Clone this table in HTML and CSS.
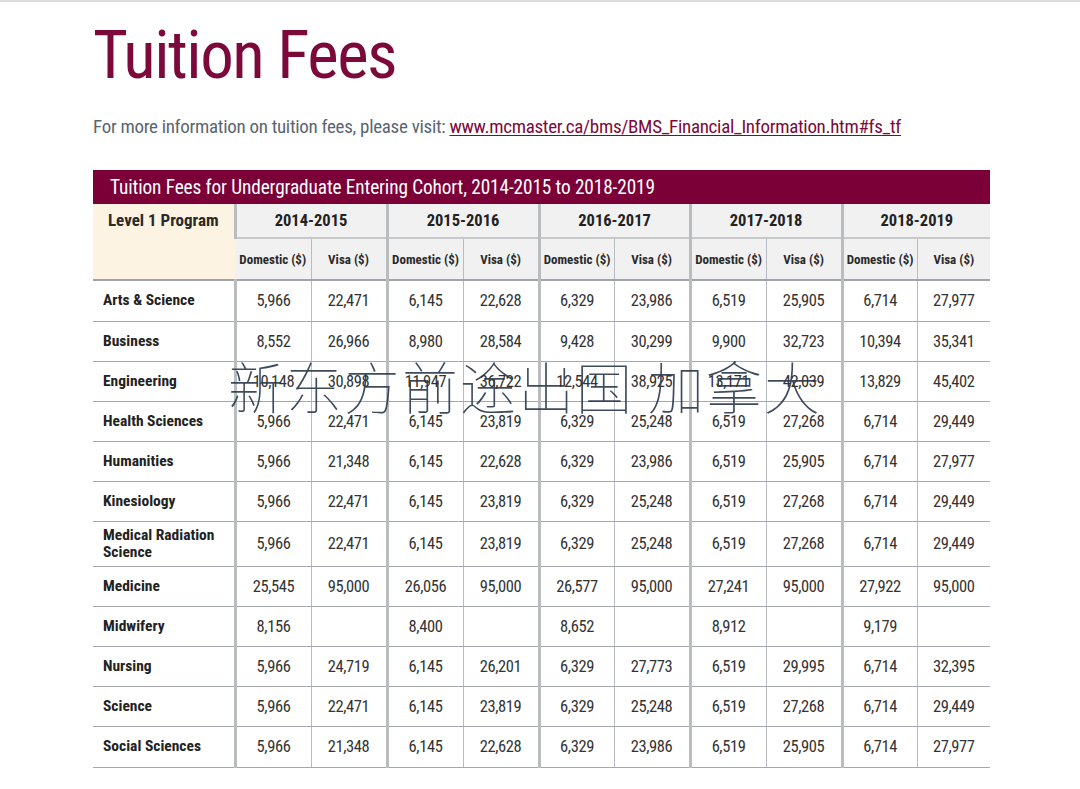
FILE: index.html
```html
<!DOCTYPE html>
<html>
<head>
<meta charset="utf-8">
<link rel="stylesheet" href="styles.css">
</head>
<body>
<div class="topline"></div>
<main class="page">
  <h1 class="title">Tuition Fees</h1>
  <p class="intro">For more information on tuition fees, please visit: <a class="link" href="#">www.mcmaster.ca/bms/BMS_Financial_Information.htm#fs_tf</a></p>
  <section class="tablewrap">
    <div class="banner">Tuition Fees for Undergraduate Entering Cohort, 2014-2015 to 2018-2019</div>
    <table class="fees">
      <colgroup>
        <col class="c-prog">
        <col class="c-76"><col class="c-76"><col class="c-76"><col class="c-76"><col class="c-75">
        <col class="c-76"><col class="c-76"><col class="c-76"><col class="c-75"><col class="c-73">
      </colgroup>
      <thead>
        <tr class="h1">
          <th class="prog-h" rowspan="2">Level 1 Program</th>
          <th colspan="2" class="year">2014-2015</th>
          <th colspan="2" class="year">2015-2016</th>
          <th colspan="2" class="year">2016-2017</th>
          <th colspan="2" class="year">2017-2018</th>
          <th colspan="2" class="year">2018-2019</th>
        </tr>
        <tr class="h2">
          <th class="sub dom">Domestic ($)</th><th class="sub">Visa ($)</th>
          <th class="sub dom">Domestic ($)</th><th class="sub">Visa ($)</th>
          <th class="sub dom">Domestic ($)</th><th class="sub">Visa ($)</th>
          <th class="sub dom">Domestic ($)</th><th class="sub">Visa ($)</th>
          <th class="sub dom">Domestic ($)</th><th class="sub">Visa ($)</th>
        </tr>
      </thead>
      <tbody>
        <tr class="r41"><td class="prog">Arts &amp; Science</td><td class="dom">5,966</td><td>22,471</td><td class="dom">6,145</td><td>22,628</td><td class="dom">6,329</td><td>23,986</td><td class="dom">6,519</td><td>25,905</td><td class="dom">6,714</td><td>27,977</td></tr>
        <tr><td class="prog">Business</td><td class="dom">8,552</td><td>26,966</td><td class="dom">8,980</td><td>28,584</td><td class="dom">9,428</td><td>30,299</td><td class="dom">9,900</td><td>32,723</td><td class="dom">10,394</td><td>35,341</td></tr>
        <tr><td class="prog">Engineering</td><td class="dom">10,148</td><td>30,898</td><td class="dom">11,947</td><td>36,722</td><td class="dom">12,544</td><td>38,925</td><td class="dom">13,171</td><td>42,039</td><td class="dom">13,829</td><td>45,402</td></tr>
        <tr><td class="prog">Health Sciences</td><td class="dom">5,966</td><td>22,471</td><td class="dom">6,145</td><td>23,819</td><td class="dom">6,329</td><td>25,248</td><td class="dom">6,519</td><td>27,268</td><td class="dom">6,714</td><td>29,449</td></tr>
        <tr><td class="prog">Humanities</td><td class="dom">5,966</td><td>21,348</td><td class="dom">6,145</td><td>22,628</td><td class="dom">6,329</td><td>23,986</td><td class="dom">6,519</td><td>25,905</td><td class="dom">6,714</td><td>27,977</td></tr>
        <tr><td class="prog">Kinesiology</td><td class="dom">5,966</td><td>22,471</td><td class="dom">6,145</td><td>23,819</td><td class="dom">6,329</td><td>25,248</td><td class="dom">6,519</td><td>27,268</td><td class="dom">6,714</td><td>29,449</td></tr>
        <tr class="r45"><td class="prog">Medical Radiation<br>Science</td><td class="dom">5,966</td><td>22,471</td><td class="dom">6,145</td><td>23,819</td><td class="dom">6,329</td><td>25,248</td><td class="dom">6,519</td><td>27,268</td><td class="dom">6,714</td><td>29,449</td></tr>
        <tr><td class="prog">Medicine</td><td class="dom">25,545</td><td>95,000</td><td class="dom">26,056</td><td>95,000</td><td class="dom">26,577</td><td>95,000</td><td class="dom">27,241</td><td>95,000</td><td class="dom">27,922</td><td>95,000</td></tr>
        <tr><td class="prog">Midwifery</td><td class="dom">8,156</td><td></td><td class="dom">8,400</td><td></td><td class="dom">8,652</td><td></td><td class="dom">8,912</td><td></td><td class="dom">9,179</td><td></td></tr>
        <tr><td class="prog">Nursing</td><td class="dom">5,966</td><td>24,719</td><td class="dom">6,145</td><td>26,201</td><td class="dom">6,329</td><td>27,773</td><td class="dom">6,519</td><td>29,995</td><td class="dom">6,714</td><td>32,395</td></tr>
        <tr><td class="prog">Science</td><td class="dom">5,966</td><td>22,471</td><td class="dom">6,145</td><td>23,819</td><td class="dom">6,329</td><td>25,248</td><td class="dom">6,519</td><td>27,268</td><td class="dom">6,714</td><td>29,449</td></tr>
        <tr class="r41"><td class="prog">Social Sciences</td><td class="dom">5,966</td><td>21,348</td><td class="dom">6,145</td><td>22,628</td><td class="dom">6,329</td><td>23,986</td><td class="dom">6,519</td><td>25,905</td><td class="dom">6,714</td><td>27,977</td></tr>
      </tbody>
    </table>
    <div class="watermark" aria-hidden="true"><span>新东方前途出国</span><span class="wm2">加拿大</span></div>
  </section>
</main>
</body>
</html>
```

FILE: styles.css
```css
html, body {
  margin: 0;
  padding: 0;
  background: #ffffff;
}
body {
  font-family: "Roboto Condensed", "Open Sans", "Liberation Sans", sans-serif;
  color: #222;
}
.topline {
  height: 2px;
  background: #dcdcdc;
}
.page {
  padding-left: 93px;
  width: 897px;
}
.title {
  margin: 0;
  padding-top: 14px;
  font-size: 67px;
  line-height: 78px;
  font-weight: normal;
  color: #7b0a3b;
  letter-spacing: -1.5px;
}
.intro {
  margin: 22px 0 0 0;
  font-size: 19px;
  line-height: 22px;
  color: #5b6570;
  white-space: nowrap;
  letter-spacing: -0.3px;
}
.link {
  color: #7b0a3b;
  text-decoration: underline;
  text-underline-offset: 2px;
}
.tablewrap {
  position: relative;
  margin-top: 32px;
}
.banner {
  height: 34px;
  line-height: 36px;
  background: #7c0038;
  color: #fff;
  font-size: 19.3px;
  letter-spacing: -0.1px;
  padding-left: 17px;
}
.fees {
  border-collapse: collapse;
  table-layout: fixed;
  width: 897px;
}
.c-prog { width: 142px; }
.c-76 { width: 76px; }
.c-75 { width: 75px; }
.c-73 { width: 73px; }
.fees th, .fees td {
  padding: 0;
  text-align: center;
  border-left: 1px solid #b8bcc0;
}
.fees th:first-child, .fees td:first-child { border-left: none; }
.fees .dom { border-left: 3px solid #babdc0; }
.h1 { height: 34px; background: #f1f1f1; }
.h1 th { border-bottom: 2px solid #c6c8ca; }
.h2 { height: 42px; background: #f1f1f1; }
.year {
  font-size: 16.5px;
  font-weight: bold;
  color: #222;
  border-left: 3px solid #babdc0 !important;
}
.prog-h {
  background: #fdf3e2;
  vertical-align: top;
  padding-top: 7px !important;
  line-height: 18px;
  font-size: 17px;
  font-weight: bold;
  color: #2a2a2a;
  border-bottom: 2px solid #a0a4a8 !important;
}
.sub {
  font-size: 13px;
  font-weight: bold;
  color: #2a2a2a;
  border-bottom: 2px solid #a0a4a8;
}
.fees tbody tr { height: 40px; }
.fees tbody tr.r41 { height: 41px; }
.fees tbody tr.r45 { height: 45px; }
.fees tbody td {
  font-size: 16.5px;
  color: #333;
  letter-spacing: -0.4px;
  border-bottom: 1px solid #a4a8ac;
}
.fees td.prog {
  text-align: left;
  padding-left: 10px;
  font-size: 15.5px;
  font-weight: bold;
  color: #222;
  line-height: 17px;
  letter-spacing: 0;
}
.watermark {
  position: absolute;
  left: 135px;
  top: 185px;
  font-family: "Noto Sans CJK SC", sans-serif;
  font-weight: 100;
  font-size: 56px;
  line-height: 60px;
  color: rgba(40, 55, 75, 0.9);
  white-space: nowrap;
  pointer-events: none;
  letter-spacing: 2px;
}
.wm2 { margin-left: 14px; }
```
